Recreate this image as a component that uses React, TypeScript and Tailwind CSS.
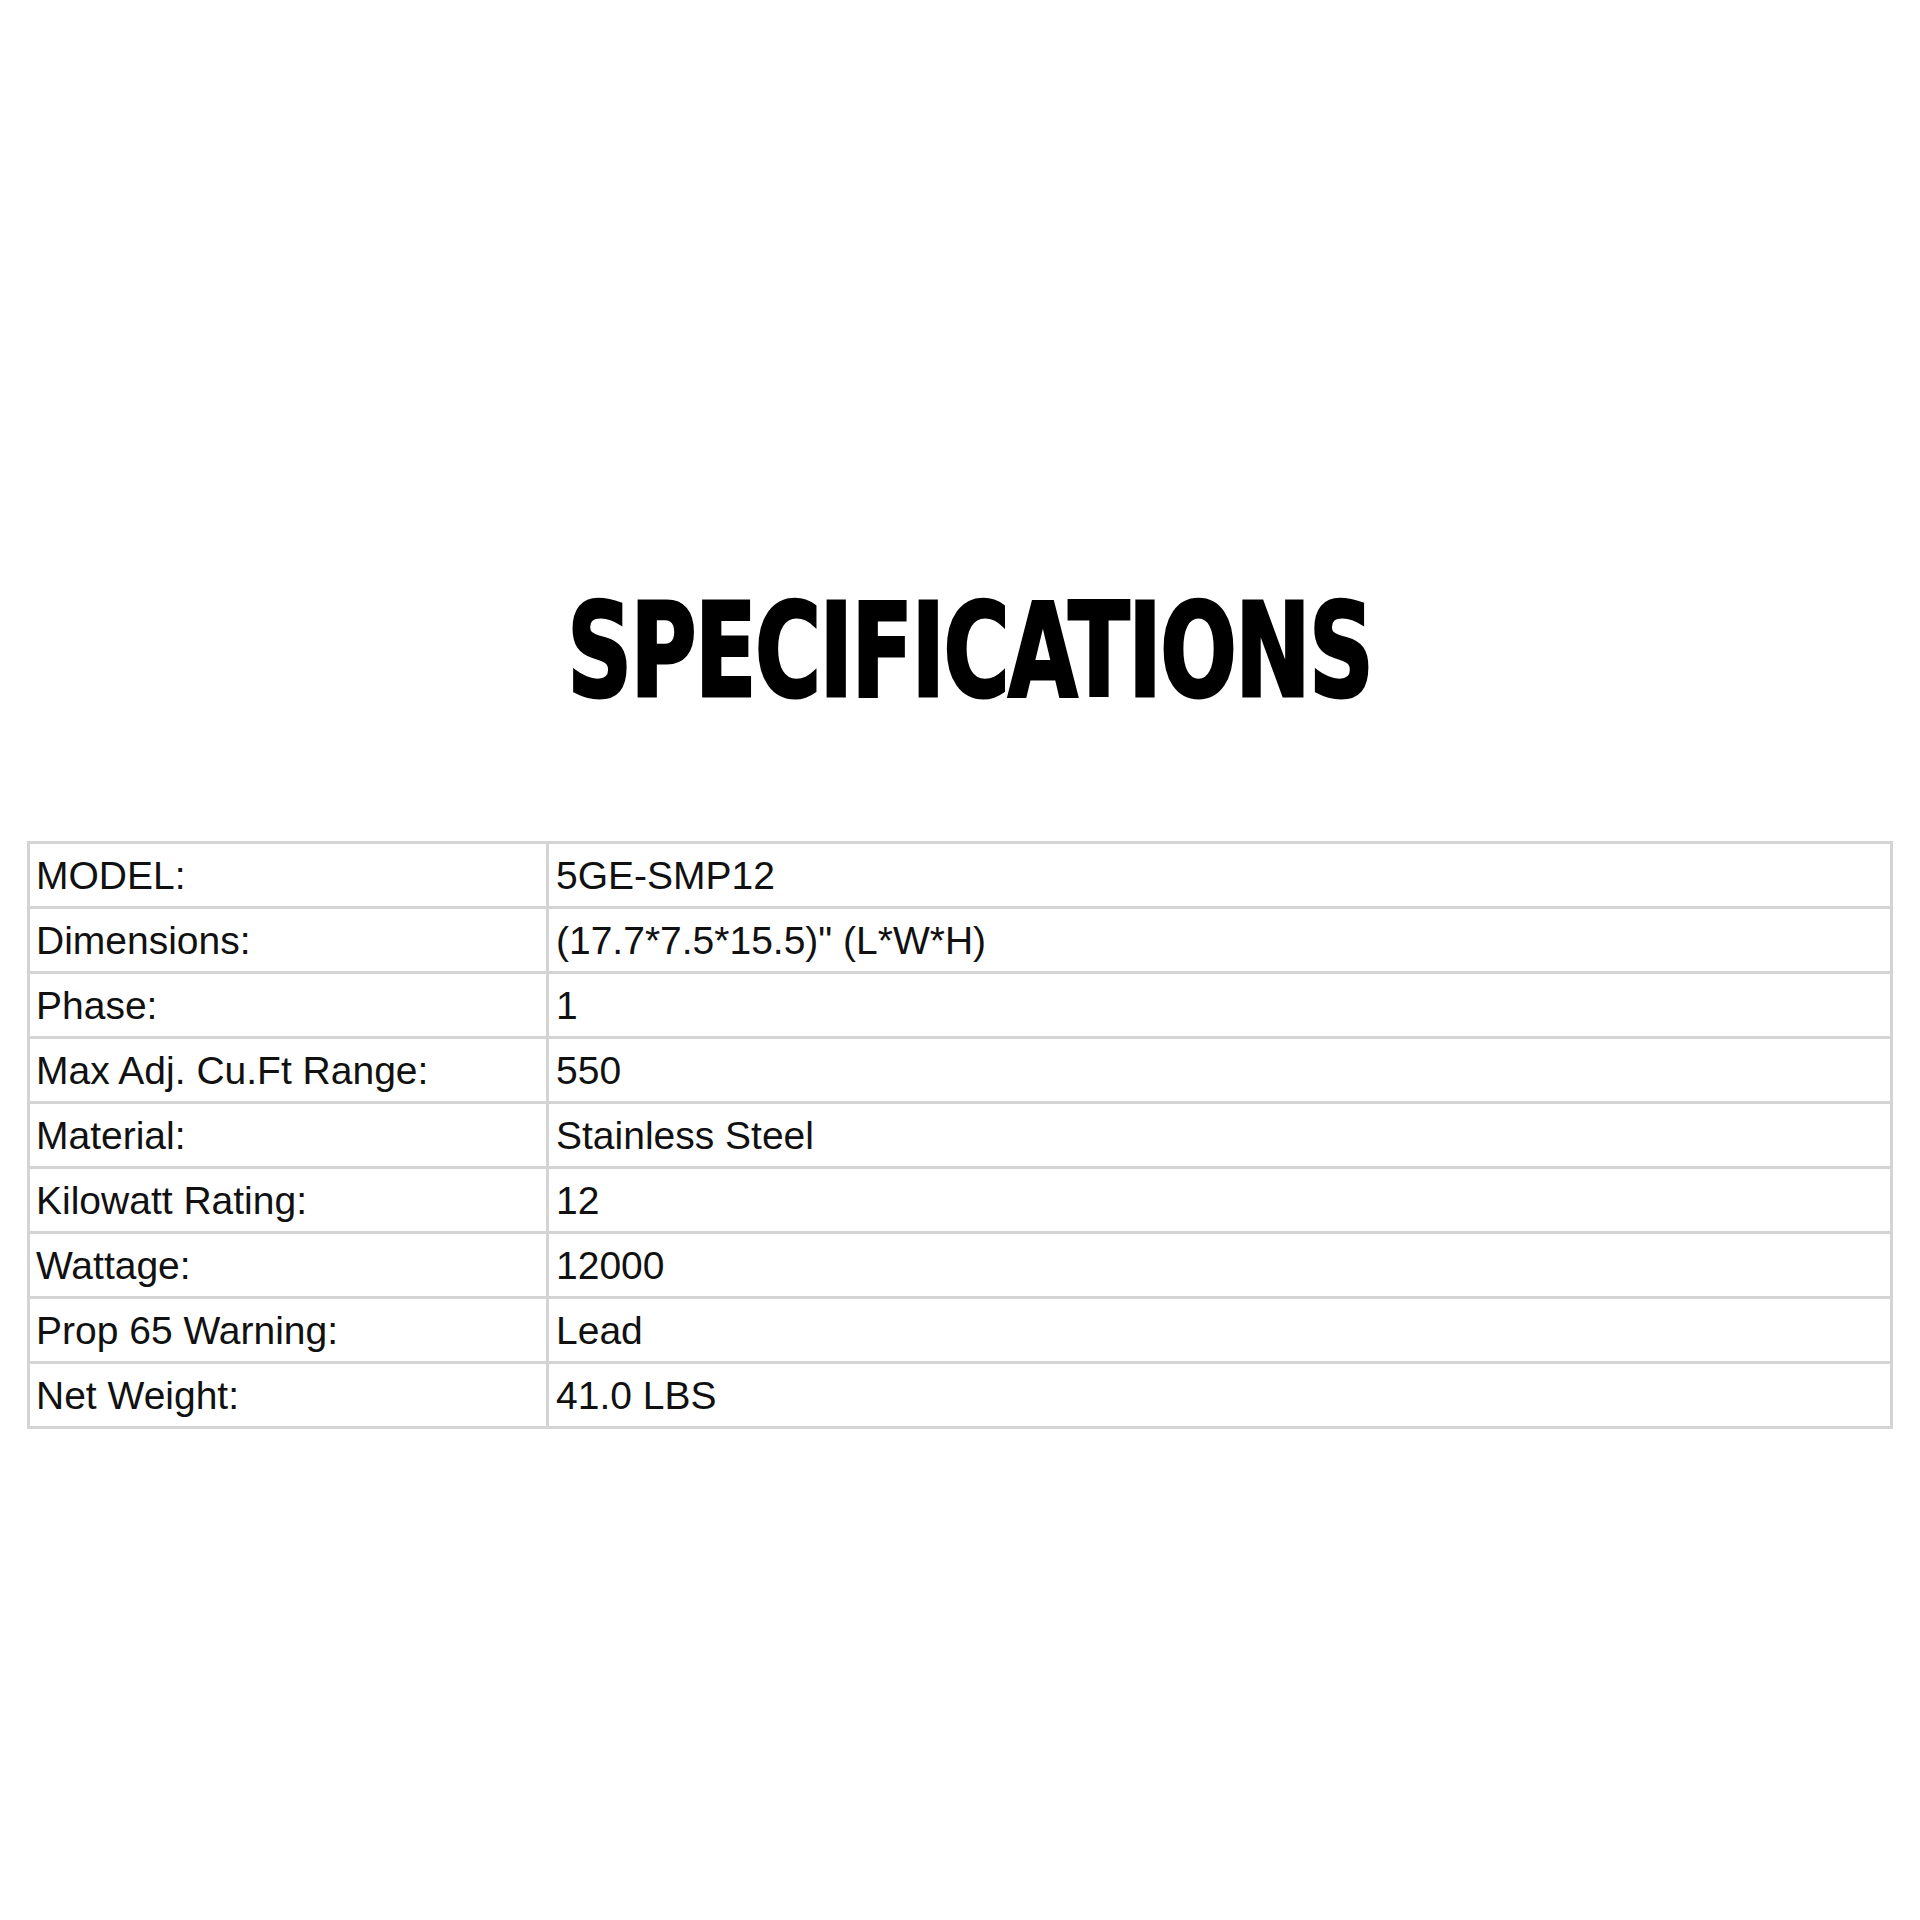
const specs: [string, string][] = [
  ['MODEL:', '5GE-SMP12'],
  ['Dimensions:', '(17.7*7.5*15.5)" (L*W*H)'],
  ['Phase:', '1'],
  ['Max Adj. Cu.Ft Range:', '550'],
  ['Material:', 'Stainless Steel'],
  ['Kilowatt Rating:', '12'],
  ['Wattage:', '12000'],
  ['Prop 65 Warning:', 'Lead'],
  ['Net Weight:', '41.0 LBS'],
];

export default function App() {
  return (
    <div className="w-[1920px] h-[1920px] bg-white flex flex-col items-center pt-[586px]">
      {/* Heading */}
      <h1 className="ml-[20px] font-['Liberation_Sans_Narrow','DejaVu_Sans_Condensed',sans-serif] font-bold text-[130px] leading-none text-black tracking-[-2px] scale-x-[0.77] [-webkit-text-stroke:3px_black]">
        SPECIFICATIONS
      </h1>

      {/* Spec table */}
      <table className="mt-[125px] w-[1866px] border-collapse border-[3px] border-[#d4d4d4] font-['Liberation_Sans',Arial,sans-serif] text-[39px] text-[#111]">
        <tbody>
          {specs.map(([label, value]) => (
            <tr key={label} className="h-[65px]">
              <td className="w-[519px] border-[3px] border-[#d4d4d4] pl-[6px] align-middle leading-none">{label}</td>
              <td className="border-[3px] border-[#d4d4d4] pl-[7px] align-middle leading-none">{value}</td>
            </tr>
          ))}
        </tbody>
      </table>
    </div>
  );
}
